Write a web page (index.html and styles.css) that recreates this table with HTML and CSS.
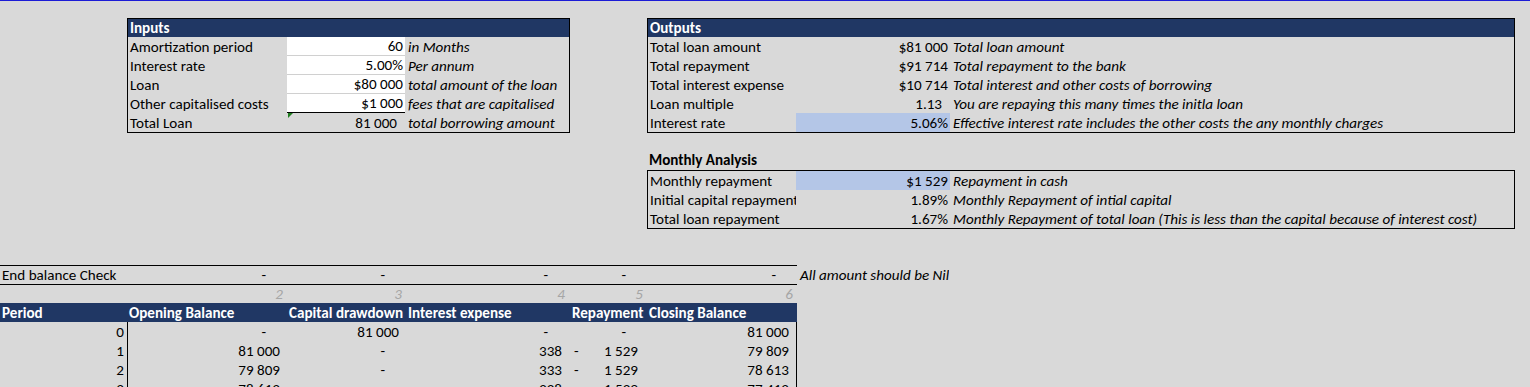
FILE: index.html
```html
<!DOCTYPE html>
<html lang="en">
<head>
  <meta charset="UTF-8">
  <meta name="viewport" content="width=device-width, initial-scale=1.0">
  <title>Loan Amortization</title>
  <link rel="stylesheet" href="styles.css">
</head>
<body>
  <div class="top">
    <section class="box inputs">
      <div class="hd">Inputs</div>
      <div class="row"><span class="lbl">Amortization period</span><span class="val in">60</span><span class="note">in Months</span></div>
      <div class="row"><span class="lbl">Interest rate</span><span class="val in">5.00%</span><span class="note">Per annum</span></div>
      <div class="row"><span class="lbl">Loan</span><span class="val in">$80 000</span><span class="note">total amount of the loan</span></div>
      <div class="row"><span class="lbl">Other capitalised costs</span><span class="val in last">$1 000</span><span class="note">fees that are capitalised</span></div>
      <div class="row"><span class="lbl">Total Loan</span><span class="val acc flag">81 000</span><span class="note">total borrowing amount</span></div>
    </section>

    <div class="right">
      <section class="box outputs">
        <div class="hd">Outputs</div>
        <div class="row"><span class="lbl">Total loan amount</span><span class="val">$81 000</span><span class="note">Total loan amount</span></div>
        <div class="row"><span class="lbl">Total repayment</span><span class="val">$91 714</span><span class="note">Total repayment to the bank</span></div>
        <div class="row"><span class="lbl">Total interest expense</span><span class="val">$10 714</span><span class="note">Total interest and other costs of borrowing</span></div>
        <div class="row"><span class="lbl">Loan multiple</span><span class="val acc">1.13</span><span class="note">You are repaying this many times the initla loan</span></div>
        <div class="row"><span class="lbl">Interest rate</span><span class="val hi">5.06%</span><span class="note">Effective interest rate includes the other costs the any monthly charges</span></div>
      </section>

      <h3 class="sub">Monthly Analysis</h3>
      <section class="box outputs">
        <div class="row"><span class="lbl">Monthly repayment</span><span class="val hi">$1 529</span><span class="note">Repayment in cash</span></div>
        <div class="row"><span class="lbl">Initial capital repayment</span><span class="val">1.89%</span><span class="note">Monthly Repayment of intial capital</span></div>
        <div class="row"><span class="lbl">Total loan repayment</span><span class="val">1.67%</span><span class="note">Monthly Repayment of total loan (This is less than the capital because of interest cost)</span></div>
      </section>
    </div>
  </div>

  <div class="check">
    <div class="cells">
      <span class="txt">End balance Check</span>
      <span class="nil">-</span>
      <span class="nil">-</span>
      <span class="nil">-</span>
      <span class="nil">-</span>
      <span class="nil">-</span>
    </div>
    <span class="note">All amount should be Nil</span>
  </div>

  <div class="cols idx">
    <span></span><span>2</span><span>3</span><span>4</span><span>5</span><span>6</span>
  </div>

  <div class="cols thead">
    <span>Period</span>
    <span>Opening Balance</span>
    <span>Capital drawdown</span>
    <span>Interest expense</span>
    <span class="rt">Repayment</span>
    <span>Closing Balance</span>
  </div>

  <div class="cols trow">
    <span class="per">0</span>
    <span class="nil">-</span>
    <span class="num">81 000</span>
    <span class="nil">-</span>
    <span class="nil">-</span>
    <span class="num">81 000</span>
  </div>
  <div class="cols trow">
    <span class="per">1</span>
    <span class="num">81 000</span>
    <span class="nil">-</span>
    <span class="num">338</span>
    <span class="neg"><i>-</i>1 529</span>
    <span class="num">79 809</span>
  </div>
  <div class="cols trow">
    <span class="per">2</span>
    <span class="num">79 809</span>
    <span class="nil">-</span>
    <span class="num">333</span>
    <span class="neg"><i>-</i>1 529</span>
    <span class="num">78 613</span>
  </div>
  <div class="cols trow">
    <span class="per">3</span>
    <span class="num">78 613</span>
    <span class="nil">-</span>
    <span class="num">328</span>
    <span class="neg"><i>-</i>1 529</span>
    <span class="num">77 412</span>
  </div>
</body>
</html>
```

FILE: styles.css
```css
body {
  margin: 0;
  height: 386px;
  overflow: hidden;
  background: #d9d9d9;
  border-top: 1px solid #1c1cd6;
  font-family: "Carlito", "Lato", sans-serif;
  font-size: 15.1px;
  color: #000;
}

/* top area: inputs box + outputs column */
.top {
  display: flex;
  align-items: flex-start;
  padding-top: 17px;
}
.box {
  border: 1px solid #000;
}
.inputs {
  margin-left: 127px;
  width: 441px;
}
.right {
  margin-left: 77px;
  width: 868px;
}
.hd {
  background: #203764;
  color: #fff;
  font-weight: bold;
  height: 18px;
  line-height: 18px;
  padding-left: 2px;
}
.row {
  display: grid;
  height: 19px;
  white-space: nowrap;
}
.row span {
  box-sizing: border-box;
  padding-top: 1px;
  line-height: 18px;
}
.inputs .row {
  grid-template-columns: 159px 118px 1fr;
}
.outputs .row {
  grid-template-columns: 148px 154px 1fr;
}
.lbl {
  padding-left: 2px;
  overflow: hidden;
}
.val {
  text-align: right;
  padding-right: 2px;
}
.val.acc {
  padding-right: 8px;
}
.row .in {
  background: #fff;
  border-bottom: 1px solid #d0d0d0;
  line-height: 17px;
}
.row .in.last {
  border-bottom-color: #000;
}
.flag {
  position: relative;
}
.flag::before {
  content: "";
  position: absolute;
  left: 1px;
  top: 0;
  border-top: 5px solid #1f7d1f;
  border-right: 5px solid transparent;
}
.hi {
  background: #b4c6e7;
}
.note {
  font-style: italic;
  padding-left: 3px;
  overflow: hidden;
}
.sub {
  margin: 18px 0 0;
  height: 19px;
  line-height: 19px;
  font-size: 15.1px;
  font-weight: bold;
  padding-left: 2px;
}

/* schedule */
.check {
  display: flex;
  margin-top: 36px;
}
.check .cells,
.cols {
  display: grid;
  grid-template-columns: 127px 160px 119px 163px 78px 150px;
}
.check .cells {
  border-top: 1px solid #000;
  border-bottom: 1px solid #000;
  height: 18px;
  line-height: 18px;
}
.check .txt {
  padding-left: 2px;
}
.check .note {
  line-height: 20px;
  padding-left: 3px;
}
.nil {
  text-align: right;
  padding-right: 21px;
}
.num {
  text-align: right;
  padding-right: 7px;
}
.idx {
  height: 18px;
  line-height: 19px;
  color: #a6a6a6;
  font-style: italic;
  text-align: right;
}
.idx span {
  padding-right: 4px;
}
.thead {
  width: 797px;
  height: 19px;
  line-height: 20px;
  background: #203764;
  color: #fff;
  font-weight: bold;
  white-space: nowrap;
}
.thead span {
  padding-left: 2px;
}
.thead .rt {
  padding-left: 3px;
}
.trow {
  width: 797px;
  height: 19px;
  white-space: nowrap;
}
.trow span {
  box-sizing: border-box;
  padding-top: 1px;
  line-height: 18px;
}
.trow .per {
  text-align: right;
  padding-right: 3px;
}
.trow span:nth-child(2) {
  border-left: 1px solid #000;
}
.trow span:last-child {
  border-right: 1px solid #000;
}
.neg {
  display: flex;
  justify-content: space-between;
  padding: 0 9px 0 5px;
}
.neg i {
  font-style: normal;
}
```
